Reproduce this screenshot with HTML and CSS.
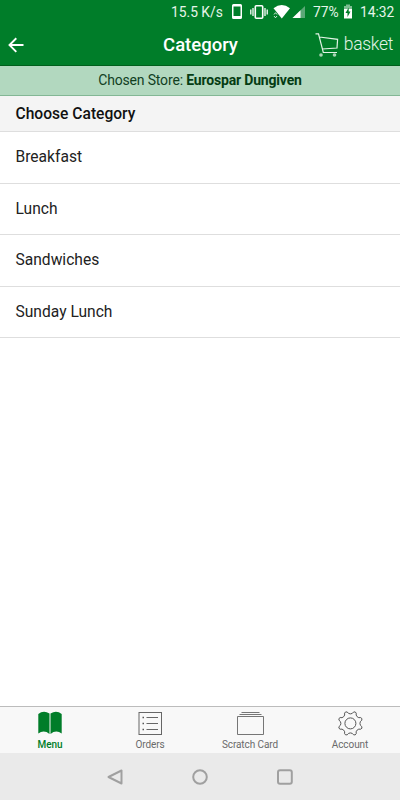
FILE: index.html
```
<!DOCTYPE html>
<html lang="en">
<head>
    <meta charset="UTF-8">
    <meta name="viewport" content="width=device-width, initial-scale=1.0">
    <title>Category</title>
    <link rel="stylesheet" href="styles.css">
</head>
<body>
    <!-- Phone status bar -->
    <div class="status-bar">
        <span class="speed">15.5 K/s</span>
        <svg class="status-icons" width="76" height="24" viewBox="0 0 76 24">
            <path fill="#fff" fill-rule="evenodd" d="M4.500 4h7q1.500 0 1.500 1.500v12q0 1.500-1.500 1.500h-7q-1.500 0-1.500-1.500v-12q0-1.500 1.500-1.500zM4.500 6.500v9.500h7v-9.500z"/>
            <rect x="26.300" y="5.800" width="7.400" height="12.400" rx="1" fill="none" stroke="#fff" stroke-width="1.600"/>
            <path d="M24 8v8M21.800 9.500v5M36 8v8M38.200 9.500v5" stroke="#fff" stroke-width="1.300"/>
            <path fill="#fff" d="M44.500 8.300Q52.800 1.700 61 8.300L52.800 18.500z"/>
            <path d="M45 14.500l1.500-1.800 1.500 1.800M45 16l1.500 1.800 1.500-1.800" fill="none" stroke="#fff" stroke-width=".8"/>
            <path fill="#5aa876" d="M76 6v12H63.500z"/>
            <path fill="#fff" d="M71.500 10.300V18h-8z"/>
        </svg>
        <span class="percent">77%</span>
        <svg class="battery" width="10" height="24" viewBox="0 0 10 24">
            <path fill="#7dbd91" d="M3 4.500h4V6h2v4H1V6h2z"/>
            <path fill="#fff" d="M1 9h8v9.500H1z"/>
            <path fill="#007d29" d="M5.700 7.500L2.500 13h2v4l3-5.500h-1.800z"/>
        </svg>
        <span class="time">14:32</span>
    </div>

    <header class="header">
        <svg class="back" width="16" height="16" viewBox="0 0 16 16">
            <path d="M8.300 1.300L1.500 8l6.800 6.800M1.500 8h14" fill="none" stroke="#fff" stroke-width="1.900"/>
        </svg>
        <h1>Category</h1>
        <div class="basket">
            <svg width="26" height="26" viewBox="0 0 26 26">
                <path d="M1.500 1.800h3l4.800 18.700h13.700M5.400 5l18.200 2.300-.6 8.700-15.100 1" fill="none" stroke="#e2f3e6" stroke-width="1.200"/>
                <circle cx="7" cy="23" r="1.800" fill="#a9d5b5"/>
                <circle cx="20.500" cy="23" r="1.800" fill="#a9d5b5"/>
            </svg>
            <span>basket</span>
        </div>
    </header>

    <div class="store">Chosen Store: <b>Eurospar Dungiven</b></div>

    <main>
        <h2>Choose Category</h2>
        <ul class="categories">
            <li>Breakfast</li>
            <li>Lunch</li>
            <li>Sandwiches</li>
            <li>Sunday Lunch</li>
        </ul>
    </main>

    <nav class="tabs">
        <div class="tab active">
            <svg width="28" height="26" viewBox="0 0 28 26">
                <path fill="#007d29" d="M2.300 4Q7.500-.2 13.500 3.500V24Q8 19.500 2.300 23.500zM14.500 3.500Q20.500-.2 25.700 4V23.500Q20 19.500 14.500 24z"/>
            </svg>
            <span>Menu</span>
        </div>
        <div class="tab">
            <svg width="28" height="26" viewBox="0 0 28 26">
                <rect x="3" y="2.500" width="22.500" height="22" fill="none" stroke="#666"/>
                <path d="M10.500 7.500H22M10.500 13.500H22M10.500 19.500H22" stroke="#666"/>
                <path d="M6.500 7.500h1.500M6.500 13.500h1.500M6.500 19.500h1.500" stroke="#555" stroke-width="1.500"/>
            </svg>
            <span>Orders</span>
        </div>
        <div class="tab">
            <svg width="28" height="26" viewBox="0 0 28 26">
                <path d="M1.500 6.500h26v18H1.500zM3.500 4.500h22M5.500 2.500h18" fill="none" stroke="#666" stroke-width=".9"/>
            </svg>
            <span>Scratch Card</span>
        </div>
        <div class="tab">
            <svg width="28" height="26" viewBox="-14.400 -13.400 28 26">
                <path d="M11.370 3.150A2 2 0 0 1 10.270 5.810A3.600 3.600 0 0 0 5.810 10.270A2 2 0 0 1 3.150 11.370A3.600 3.600 0 0 0-3.150 11.370A2 2 0 0 1-5.810 10.270A3.600 3.600 0 0 0-10.270 5.810A2 2 0 0 1-11.370 3.150A3.600 3.600 0 0 0-11.370-3.150A2 2 0 0 1-10.270-5.810A3.600 3.600 0 0 0-5.810-10.270A2 2 0 0 1-3.150-11.370A3.600 3.600 0 0 0 3.150-11.370A2 2 0 0 1 5.810-10.270A3.600 3.600 0 0 0 10.270-5.810A2 2 0 0 1 11.370-3.150A3.600 3.600 0 0 0 11.370 3.150z" fill="none" stroke="#555"/>
                <circle r="5.500" fill="none" stroke="#555"/>
            </svg>
            <span>Account</span>
        </div>
    </nav>

    <!-- Phone navigation buttons -->
    <div class="phone-nav">
        <svg width="20" height="20" viewBox="0 0 20 20">
            <path d="M16.500 3.500v13L3.500 10z"/>
        </svg>
        <svg width="20" height="20" viewBox="0 0 20 20">
            <circle cx="10" cy="10" r="6.800"/>
        </svg>
        <svg width="20" height="20" viewBox="0 0 20 20">
            <rect x="3" y="3.200" width="13.800" height="13.600" rx="2"/>
        </svg>
    </div>
</body>
</html>
```

FILE: styles.css
```
* {
    box-sizing: border-box;
}

body {
    margin: 0;
    height: 800px;
    display: flex;
    flex-direction: column;
    font-family: Roboto, sans-serif;
    background: #fff;
    color: #222;
    overflow: hidden;
}

svg {
    display: block;
    flex: none;
}

/* Status bar */
.status-bar {
    display: flex;
    height: 24px;
    padding-left: 171px;
    background: #007d29;
    color: #e6f5ea;
    font-size: 13.8px;
    line-height: 25px;
    white-space: nowrap;
}

.speed {
    width: 58px;
}

.percent {
    width: 29px;
    margin-left: 8px;
}

.battery {
    margin-left: 1px;
}

.time {
    margin-left: 7px;
}

/* Header */
.header {
    display: grid;
    grid-template-columns: 100px 1fr 100px;
    align-items: center;
    height: 42px;
    padding: 0 7px 0 8px;
    background: #007d29;
    border-bottom: 1px solid #00601c;
    color: #fff;
}

.header h1 {
    margin: 0;
    font-size: 18.5px;
    font-weight: 500;
    text-align: center;
}

.basket {
    display: flex;
    align-items: center;
    justify-content: flex-end;
    gap: 4px;
    color: #e2f3e6;
    font-size: 17.5px;
    font-weight: 300;
    letter-spacing: -0.3px;
}

.basket span {
    margin-top: -2px;
}

/* Chosen store */
.store {
    height: 30px;
    background: #b2d8bf;
    border-bottom: 1px solid #83b795;
    color: #11401f;
    font-size: 14px;
    letter-spacing: -0.17px;
    line-height: 28px;
    text-align: center;
}

.store b {
    color: #053c13;
}

/* Category list */
main {
    flex: 1;
}

h2 {
    height: 36px;
    margin: 0;
    padding-left: 15.5px;
    background: #f4f4f4;
    border-bottom: 1px solid #dedede;
    color: #111;
    font-size: 15.6px;
    font-weight: 500;
    line-height: 36px;
}

.categories {
    margin: 0;
    padding: 0;
    list-style: none;
}

.categories li {
    height: 51.6px;
    padding-left: 15.5px;
    border-bottom: 1px solid #dedede;
    font-size: 15.6px;
    line-height: 51px;
}

/* Tabs */
.tabs {
    display: grid;
    grid-template-columns: repeat(4, 1fr);
    height: 47px;
    background: #f8f8f8;
    border-top: 1px solid #bcbcbc;
}

.tab {
    display: flex;
    flex-direction: column;
    align-items: center;
    padding-top: 3px;
    color: #6a6a6a;
    font-size: 10px;
    letter-spacing: -0.08px;
    line-height: 18px;
}

.tab.active {
    color: #007d29;
    font-weight: 500;
}

/* Phone navigation */
.phone-nav {
    display: flex;
    justify-content: center;
    align-items: center;
    gap: 65px;
    height: 47px;
    background: #eaeaea;
}

.phone-nav svg {
    fill: none;
    stroke: #a0a0a0;
    stroke-width: 2;
    stroke-linejoin: round;
}
```
